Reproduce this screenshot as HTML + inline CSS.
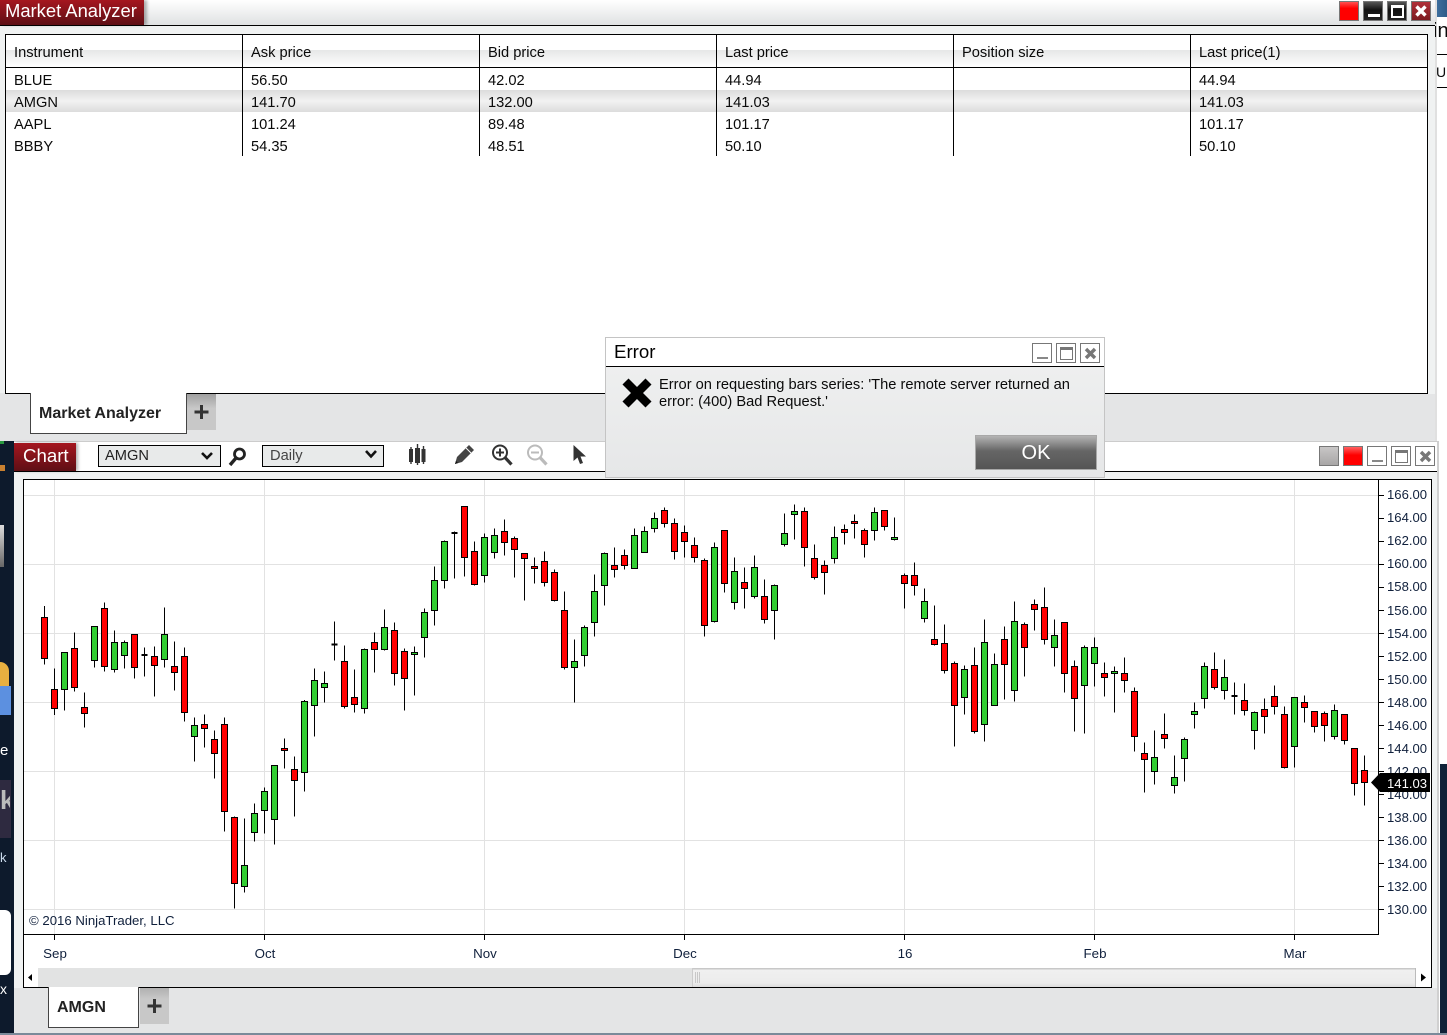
<!DOCTYPE html>
<html><head><meta charset="utf-8"><title>Market Analyzer</title>
<style>
html,body{margin:0;padding:0;width:1447px;height:1035px;overflow:hidden;background:#fff;font-family:"Liberation Sans",sans-serif;color:#000}
div,span,svg{position:absolute;box-sizing:border-box}
.t{font-size:14.67px;line-height:16px;white-space:nowrap;color:#0a0a0a;margin-top:1px}
.v{background:#000;width:1px;top:34px;height:122px}
.p{font-size:13.1px;line-height:16px;left:1387px;white-space:nowrap;color:#10203c}
.d{font-size:13.33px;line-height:16px;top:945px;width:60px;text-align:center;color:#10203c;margin-top:1px}
.wb{width:20px;height:20px;border:1px solid #777}
.dk{background:linear-gradient(#555,#111 45%,#222)}
</style></head><body>

<!-- right window sliver -->
<div style="left:1435px;top:0;width:12px;height:764px;background:#fff"></div>
<div style="left:1437px;top:0;width:10px;height:17px;background:linear-gradient(90deg,#3d6f9e,#2f5c88)"></div>
<div style="left:1435px;top:0;width:2px;height:441px;background:#e0e0e0"></div>
<div class="t" style="left:1433px;top:19px;font-size:20px;line-height:22px">in</div>
<div style="left:1437px;top:54px;width:10px;height:1px;background:#000"></div>
<div class="t" style="left:1436px;top:63px;font-size:14px">Ur</div>
<div style="left:1437px;top:87px;width:10px;height:1px;background:#000"></div>

<!-- Market Analyzer window -->
<div style="left:0;top:0;width:1435px;height:441px;background:#f0f2f2"></div>
<div style="left:0;top:0;width:1435px;height:25px;background:linear-gradient(#fff,#dfe1e2)"></div>
<div style="left:0;top:25px;width:1435px;height:1px;background:#000"></div>
<div style="left:0;top:0;width:144px;height:25px;background:linear-gradient(#a5161f,#5e0f15);box-shadow:3px 0 3px rgba(0,0,0,.3);color:#fff;font-size:18.4px;line-height:22px;padding-left:5px;white-space:nowrap">Market Analyzer</div>
<div class="wb" style="left:1339px;top:1px;background:linear-gradient(#ff5050,#f00 35%)"></div>
<div class="wb dk" style="left:1363px;top:1px"><div style="left:4px;top:12px;width:12px;height:3px;background:#fff"></div></div>
<div class="wb dk" style="left:1387px;top:1px"><div style="left:3px;top:3px;width:13px;height:13px;border:2px solid #fff;border-top-width:3px"></div></div>
<div class="wb" style="left:1411px;top:1px;background:linear-gradient(#b03038,#7c1a20)">
<svg style="left:3px;top:3px" width="12" height="12"><path d="M1.5 1.5L10.5 10.5M10.5 1.5L1.5 10.5" stroke="#fff" stroke-width="3.4"/></svg></div>

<!-- table -->
<div style="left:5px;top:34px;width:1423px;height:360px;background:#fff;border:1px solid #000"></div>
<div style="left:6px;top:50px;width:1421px;height:17px;background:linear-gradient(#e6e7e7,#fff)"></div>
<div style="left:6px;top:67px;width:1421px;height:1px;background:#000"></div>
<div style="left:6px;top:90px;width:1421px;height:22px;background:linear-gradient(#dcdcdc,#f2f2f2 50%,#dcdcdc)"></div>
<div class="v" style="left:242px"></div><div class="v" style="left:479px"></div><div class="v" style="left:716px"></div><div class="v" style="left:953px"></div><div class="v" style="left:1190px"></div>

<div class="t" style="left:14px;top:44px">Instrument</div><div class="t" style="left:251px;top:44px">Ask price</div><div class="t" style="left:488px;top:44px">Bid price</div><div class="t" style="left:725px;top:44px">Last price</div><div class="t" style="left:962px;top:44px">Position size</div><div class="t" style="left:1199px;top:44px">Last price(1)</div>
<div class="t" style="left:14px;top:72px">BLUE</div><div class="t" style="left:251px;top:72px">56.50</div><div class="t" style="left:488px;top:72px">42.02</div><div class="t" style="left:725px;top:72px">44.94</div><div class="t" style="left:1199px;top:72px">44.94</div>
<div class="t" style="left:14px;top:94px">AMGN</div><div class="t" style="left:251px;top:94px">141.70</div><div class="t" style="left:488px;top:94px">132.00</div><div class="t" style="left:725px;top:94px">141.03</div><div class="t" style="left:1199px;top:94px">141.03</div>
<div class="t" style="left:14px;top:116px">AAPL</div><div class="t" style="left:251px;top:116px">101.24</div><div class="t" style="left:488px;top:116px">89.48</div><div class="t" style="left:725px;top:116px">101.17</div><div class="t" style="left:1199px;top:116px">101.17</div>
<div class="t" style="left:14px;top:138px">BBBY</div><div class="t" style="left:251px;top:138px">54.35</div><div class="t" style="left:488px;top:138px">48.51</div><div class="t" style="left:725px;top:138px">50.10</div><div class="t" style="left:1199px;top:138px">50.10</div>

<!-- tab strip top -->
<div style="left:0;top:394px;width:1435px;height:47px;background:#e4e5e6"></div>
<div style="left:0;top:393px;width:5px;height:1px;background:#e4e5e6"></div>
<div style="left:30px;top:393px;width:157px;height:41px;background:#fff;border:1px solid #444;border-top:none;font-weight:bold;font-size:16px;line-height:41px;padding-left:8px;color:#222;white-space:nowrap">Market Analyzer</div>
<div style="left:187px;top:394px;width:29px;height:36px;background:linear-gradient(#a0a0a0,#c8c8c8 40%);"></div>
<svg style="left:187px;top:394px" width="29" height="36"><path d="M14.5 11V25M7.5 18H21.5" stroke="#333" stroke-width="3"/></svg>

<!-- wallpaper left -->
<div style="left:0;top:441px;width:14px;height:594px;background:#0d1a2c"></div>
<div style="left:0;top:441px;width:4px;height:3px;background:#2a9a40"></div>
<div style="left:0;top:465px;width:5px;height:6px;background:#c88030"></div>
<div style="left:0;top:525px;width:4px;height:42px;background:linear-gradient(#ddd,#666)"></div>
<div style="left:0;top:662px;width:9px;height:24px;background:#e8b040;border-top-right-radius:9px"></div>
<div style="left:0;top:686px;width:11px;height:29px;background:#5c90e0"></div>
<div style="left:0;top:742px;color:#fff;font-size:15px;line-height:18px;width:8px;overflow:hidden">e</div>
<div style="left:0;top:780px;width:11px;height:58px;background:#2e2a40"></div>
<div style="left:0;top:786px;width:10px;color:#bbb;font-size:26px;font-weight:bold;line-height:28px;overflow:hidden">k</div>
<div style="left:0;top:850px;color:#cde;font-size:13px;line-height:16px">k</div>
<div style="left:0;top:910px;width:11px;height:65px;background:#fff;border-radius:0 6px 6px 0"></div>
<div style="left:0;top:981px;color:#fff;font-size:14px;line-height:16px">x</div>

<!-- chart window -->
<div style="left:14px;top:441px;width:1425px;height:592px;background:#f0f2f2;border-top:1px solid #ccc;border-right:2px solid #d0d0d0"></div>
<div style="left:1440px;top:764px;width:7px;height:271px;background:#0f2238"></div>
<div style="left:0;top:1033px;width:1447px;height:2px;background:#7a8a9a"></div>
<div style="left:14px;top:442px;width:1423px;height:29px;background:#fff"></div>
<div style="left:14px;top:471px;width:1423px;height:1px;background:#000"></div>
<div style="left:14px;top:443px;width:62px;height:28px;background:linear-gradient(#a5161f,#5e0f15);box-shadow:2px 0 3px rgba(0,0,0,.3);color:#fff;font-size:18.67px;line-height:26px;padding-left:9px">Chart</div>

<div style="left:98px;top:445px;width:123px;height:22px;background:#e8eaea;border:1px solid #000;font-size:14.67px;line-height:20px;padding-left:6px;color:#222">AMGN</div>
<svg style="left:200px;top:451px" width="14" height="10"><path d="M2 2L7 7L12 2" fill="none" stroke="#111" stroke-width="2.6"/></svg>
<svg style="left:226px;top:444px" width="24" height="24"><circle cx="13.5" cy="10" r="5" fill="none" stroke="#222" stroke-width="2.8"/><path d="M10 14L4 21" stroke="#222" stroke-width="3.4"/></svg>
<div style="left:262px;top:445px;width:122px;height:22px;background:#e8eaea;border:1px solid #000;font-size:14.67px;line-height:20px;padding-left:7px;color:#444">Daily</div>
<svg style="left:364px;top:449px" width="14" height="11"><path d="M2 2L7 7.5L12 2" fill="none" stroke="#111" stroke-width="2.6"/></svg>

<svg style="left:405px;top:442px" width="190" height="28">
<path d="M6 5V22M12.5 2V23M18.5 4V22" stroke="#333" stroke-width="1.4"/>
<path d="M4 7H8V20H4ZM10 6H15V21H10ZM16.5 7H20.5V20H16.5Z" fill="#333"/>
<path d="M50 22L52 15L64 3L69 8L57 20Z" fill="#444"/><path d="M61 6L66 11" stroke="#fff" stroke-width="1"/><path d="M50 22L53 21L51 19Z" fill="#111"/>
<circle cx="95" cy="10.5" r="7" fill="#fff" stroke="#333" stroke-width="2"/><path d="M91 10.5H99M95 6.5V14.5" stroke="#333" stroke-width="2"/><path d="M100 15.5L106.5 22.5" stroke="#333" stroke-width="3.2"/>
<circle cx="130" cy="10.5" r="7" fill="#fff" stroke="#bbb" stroke-width="2"/><path d="M126 10.5H134" stroke="#bbb" stroke-width="2"/><path d="M135 15.5L141.5 22.5" stroke="#bbb" stroke-width="3.2"/>
<path d="M168.5 3V19L172.5 15.5L175 22L178 21L175.5 14.500H181Z" fill="#333"/>
</svg>

<div class="wb" style="left:1319px;top:446px;background:linear-gradient(#c8c6c6,#a8a6a6)"></div>
<div class="wb" style="left:1343px;top:446px;background:linear-gradient(#ff6060,#f00 45%)"></div>
<div class="wb" style="left:1367px;top:446px;background:#fff"><div style="left:4px;top:13px;width:11px;height:2px;background:#888"></div></div>
<div class="wb" style="left:1391px;top:446px;background:#fff"><div style="left:3px;top:3px;width:13px;height:13px;border:1px solid #777;border-top-width:3px"></div></div>
<div class="wb" style="left:1415px;top:446px;background:#fff"><svg style="left:3px;top:3px" width="13" height="13"><path d="M2 2L11 11M11 2L2 11" stroke="#777" stroke-width="3.4"/></svg></div>

<!-- chart frame -->
<div style="left:23px;top:479px;width:1409px;height:509px;background:#fff;border:1px solid #000"></div>
<div style="left:24px;top:968px;width:668px;height:19px;background:#e2e3e3"></div>
<div style="left:692px;top:968px;width:724px;height:19px;background:linear-gradient(#c8c8c8 0,#c8c8c8 1px,#f0f0f0 2px,#ececec 15px,#dcdcdc);border-left:1px solid #ccc;border-right:1px solid #bbb"></div>
<svg style="left:695px;top:972px" width="6" height="11"><path d="M0.500 0V11M2.500 0V11M4.500 0V11" stroke="#c8c8c8"/></svg>
<div style="left:24px;top:968px;width:14px;height:19px;background:#fff"></div>
<svg style="left:24px;top:968px" width="14" height="19"><path d="M4 9.500L8 6V13Z" fill="#000"/></svg>
<svg style="left:1417px;top:968px" width="14" height="19"><path d="M9 9.500L4 5.500V13.500Z" fill="#000"/></svg>

<svg style="left:0;top:0" width="1447" height="1035" shape-rendering="crispEdges">
<g stroke="#e2e2e2" stroke-width="1" fill="none">
<path d="M24 495.5H1378M24 564.5H1378M24 633.5H1378M24 702.5H1378M24 771.5H1378M24 840.5H1378M24 909.5H1378"/>
<path d="M54.5 480V934M264.5 480V934M484.5 480V934M684.5 480V934M904.5 480V934M1094.5 480V934M1294.5 480V934"/>
</g>
<path d="M24 934.5H1378M1378.5 480V935" stroke="#000" fill="none"/>
<path d="M54.5 934V940M264.5 934V940M484.5 934V940M684.5 934V940M904.5 934V940M1094.5 934V940M1294.5 934V940" stroke="#000"/>
<path d="M1378 495.5H1384M1378 518.5H1384M1378 541.5H1384M1378 564.5H1384M1378 587.5H1384M1378 610.5H1384M1378 633.5H1384M1378 656.5H1384M1378 679.5H1384M1378 702.5H1384M1378 725.5H1384M1378 748.5H1384M1378 771.5H1384M1378 794.5H1384M1378 817.5H1384M1378 840.5H1384M1378 863.5H1384M1378 886.5H1384M1378 909.5H1384" stroke="#000"/>

<g transform="translate(20,590) scale(.33333)" stroke="#000" stroke-width="3">
<path fill="none" d="M73.5 48V224M103.5 235V375M133.5 187V362M163.5 127V305M193.5 307V413M223.5 109V233M253.5 37V245M283.5 121V248M313.5 151V236M343.5 133V266M373.5 172V260M403.5 169V320M433.5 52V233M463.5 154V302M493.5 172V395M523.5 382V515M553.5 373V473M583.5 421V566M613.5 382V725M643.5 679V956M673.5 685V908M703.5 640V755M733.5 592V731M763.5 526V764M793.5 445V536M823.5 499V680M853.5 330V605M883.5 235V440M913.5 244V338M943.5 94V212M973.5 166V356M1003.5 238V368"/>
<path fill="#ff0000" d="M64.5 82H82.5V205H64.5ZM94.5 298H112.5V355H94.5ZM154.5 175H172.5V292H154.5ZM184.5 352H202.5V370H184.5ZM244.5 55H262.5V229H244.5ZM334.5 133H352.5V232H334.5ZM394.5 199H412.5V226H394.5ZM454.5 229H472.5V247H454.5ZM484.5 199H502.5V367H484.5ZM544.5 403H562.5V415H544.5ZM574.5 448H592.5V490H574.5ZM604.5 403H622.5V664H604.5ZM634.5 682H652.5V880H634.5ZM784.5 475H802.5V481H784.5ZM814.5 538H832.5V571H814.5ZM964.5 214H982.5V349H964.5ZM994.5 322H1012.5V343H994.5Z"/>
<path fill="#32cd32" d="M124.5 187H142.5V298H124.5ZM214.5 109H232.5V211H214.5ZM274.5 157H292.5V238H274.5ZM304.5 157H322.5V196H304.5ZM424.5 133H442.5V208H424.5ZM514.5 406H532.5V439H514.5ZM664.5 826H682.5V889H664.5ZM694.5 670H712.5V727H694.5ZM724.5 604H742.5V661H724.5ZM754.5 526H772.5V688H754.5ZM844.5 334H862.5V547H844.5ZM874.5 271H892.5V346H874.5ZM904.5 280H922.5V292H904.5Z"/>
<path fill="none" stroke-width="6" d="M364.5 194.5H382.5M934.5 164H952.5"/>
</g>

<g transform="translate(340,495) scale(.33333)" stroke="#000" stroke-width="3">
<path fill="none" d="M43.5 523V653M73.5 460V656M103.5 412V533M133.5 343V467M163.5 382V572M193.5 460V647M223.5 454V602M253.5 340V488M283.5 214V392M313.5 136V281M343.5 109V251M373.5 34V245M403.5 139V272M433.5 115V263M463.5 100V191M493.5 73V182M523.5 124V248M553.5 175V317M583.5 187V266M613.5 169V275M643.5 223V320M673.5 289V524M703.5 433V623M733.5 391V515M763.5 238V425M793.5 172V332M823.5 157V248M853.5 163V224M883.5 100V220M913.5 94V172M943.5 52V113M973.5 37V98M1003.5 70V194"/>
<path fill="#ff0000" d="M34.5 607H52.5V628H34.5ZM94.5 442H112.5V463H94.5ZM154.5 406H172.5V535H154.5ZM184.5 469H202.5V550H184.5ZM364.5 34H382.5V187H364.5ZM394.5 169H412.5V268H394.5ZM484.5 109H502.5V142H484.5ZM514.5 130H532.5V163H514.5ZM544.5 175H562.5V190H544.5ZM574.5 214H592.5V220H574.5ZM604.5 199H622.5V262H604.5ZM634.5 232H652.5V316H634.5ZM664.5 346H682.5V517H664.5ZM814.5 211H832.5V223H814.5ZM844.5 181H862.5V211H844.5ZM964.5 46H982.5V85H964.5ZM994.5 85H1012.5V169H994.5Z"/>
<path fill="#32cd32" d="M64.5 463H82.5V640H64.5ZM124.5 397H142.5V463H124.5ZM214.5 472H232.5V478H214.5ZM244.5 352H262.5V427H244.5ZM274.5 256H292.5V346H274.5ZM304.5 139H322.5V256H304.5ZM424.5 127H442.5V241H424.5ZM454.5 121H472.5V172H454.5ZM694.5 499H712.5V517H694.5ZM724.5 397H742.5V481H724.5ZM754.5 289H772.5V382H754.5ZM784.5 175H802.5V271H784.5ZM874.5 121H892.5V220H874.5ZM904.5 109H922.5V172H904.5ZM934.5 70H952.5V100H934.5Z"/>
<path fill="none" stroke-width="6" d="M334.5 114H352.5"/>
</g>

<g transform="translate(670,495) scale(.33333)" stroke="#000" stroke-width="3">
<path fill="none" d="M43.5 91V188M73.5 127V203M103.5 190V425M133.5 142V383M163.5 106V293M193.5 187V344M223.5 217V341M253.5 181V311M283.5 253V386M313.5 268V434M343.5 55V155M373.5 28V134M403.5 37V215M433.5 148V254M463.5 196V299M493.5 94V206M523.5 88V149M553.5 58V131M583.5 100V188M613.5 37V137M643.5 46V107M673.5 67V137M703.5 235V341M733.5 202V302M763.5 280V383M793.5 331V452M823.5 388V536M853.5 499V755M883.5 511V659M913.5 457V716M943.5 373V740M973.5 475V631M1003.5 394V614"/>
<path fill="#ff0000" d="M34.5 112H52.5V139H34.5ZM64.5 151H82.5V187H64.5ZM94.5 196H112.5V391H94.5ZM154.5 106H172.5V265H154.5ZM214.5 262H232.5V280H214.5ZM274.5 304H292.5V373H274.5ZM394.5 49H412.5V157H394.5ZM424.5 190H442.5V247H424.5ZM454.5 211H472.5V232H454.5ZM514.5 103H532.5V112H514.5ZM544.5 79H562.5V85H544.5ZM574.5 106H592.5V148H574.5ZM634.5 46H652.5V94H634.5ZM694.5 241H712.5V265H694.5ZM724.5 241H742.5V271H724.5ZM784.5 433H802.5V448H784.5ZM814.5 445H832.5V526H814.5ZM844.5 505H862.5V631H844.5ZM904.5 511H922.5V709H904.5ZM994.5 433H1012.5V508H994.5Z"/>
<path fill="#32cd32" d="M124.5 157H142.5V379H124.5ZM184.5 229H202.5V322H184.5ZM244.5 217H262.5V304H244.5ZM304.5 271H322.5V346H304.5ZM334.5 115H352.5V148H334.5ZM364.5 49H382.5V58H364.5ZM484.5 127H502.5V190H484.5ZM604.5 52H622.5V106H604.5ZM664.5 127H682.5V133H664.5ZM754.5 319H772.5V370H754.5ZM874.5 523H892.5V607H874.5ZM934.5 442H952.5V688H934.5ZM964.5 508H982.5V631H964.5Z"/>
</g>

<g transform="translate(1000,580) scale(.33333)" stroke="#000" stroke-width="3">
<path fill="none" d="M43.5 64V365M73.5 127V290M103.5 58V152M133.5 22V194M163.5 118V260M193.5 127V338M223.5 241V455M253.5 196V461M283.5 172V320M313.5 247V350M343.5 259V398M373.5 232V338M403.5 322V515M433.5 487V638M463.5 451V614M493.5 400V506M523.5 526V641M553.5 472V605M583.5 367V446M613.5 247V386M643.5 217V328M673.5 238V359M703.5 307V404M733.5 310V407M763.5 394V509M793.5 355V461M823.5 316V404M853.5 379V566M883.5 352V563M913.5 346V428M943.5 394V458M973.5 394V485M1003.5 373V479M1033.5 403V494M1063.5 505V647M1093.5 526V677"/>
<path fill="#ff0000" d="M64.5 133H82.5V202H64.5ZM94.5 73H112.5V88H94.5ZM124.5 82H142.5V178H124.5ZM184.5 127H202.5V280H184.5ZM214.5 259H232.5V355H214.5ZM304.5 280H322.5V292H304.5ZM364.5 280H382.5V301H364.5ZM394.5 334H412.5V469H394.5ZM424.5 520H442.5V538H424.5ZM484.5 463H502.5V475H484.5ZM634.5 268H652.5V322H634.5ZM724.5 361H742.5V391H724.5ZM784.5 388H802.5V409H784.5ZM814.5 349H832.5V379H814.5ZM844.5 403H862.5V562H844.5ZM904.5 367H922.5V382H904.5ZM934.5 394H952.5V439H934.5ZM964.5 400H982.5V436H964.5ZM1024.5 403H1042.5V481H1024.5ZM1054.5 505H1072.5V610H1054.5ZM1084.5 571H1102.5V607H1084.5Z"/>
<path fill="#32cd32" d="M34.5 124H52.5V331H34.5ZM154.5 166H172.5V202H154.5ZM244.5 202H262.5V316H244.5ZM274.5 202H292.5V250H274.5ZM334.5 274H352.5V280H334.5ZM454.5 532H472.5V574H454.5ZM514.5 592H532.5V616H514.5ZM544.5 478H562.5V535H544.5ZM574.5 394H592.5V403H574.5ZM604.5 259H622.5V355H604.5ZM664.5 292H682.5V331H664.5ZM754.5 397H772.5V451H754.5ZM874.5 352H892.5V499H874.5ZM994.5 391H1012.5V469H994.5Z"/>
<path fill="none" stroke-width="6" d="M694.5 347.5H712.5"/>
</g>
</svg>

<!-- price axis -->
<div class="p" style="top:487px">166.00</div><div class="p" style="top:510px">164.00</div><div class="p" style="top:533px">162.00</div><div class="p" style="top:556px">160.00</div><div class="p" style="top:579px">158.00</div><div class="p" style="top:603px">156.00</div><div class="p" style="top:626px">154.00</div><div class="p" style="top:649px">152.00</div><div class="p" style="top:672px">150.00</div><div class="p" style="top:695px">148.00</div><div class="p" style="top:718px">146.00</div><div class="p" style="top:741px">144.00</div><div class="p" style="top:764px">142.00</div><div class="p" style="top:787px">140.00</div><div class="p" style="top:810px">138.00</div><div class="p" style="top:833px">136.00</div><div class="p" style="top:856px">134.00</div><div class="p" style="top:879px">132.00</div><div class="p" style="top:902px">130.00</div>
<svg style="left:1371px;top:773px" width="60" height="19"><path d="M0 9.500L9 0H59V19H9Z" fill="#000"/></svg>
<div class="p" style="top:776px;color:#fff">141.03</div>

<div class="t" style="left:29px;top:912px;font-size:13.2px;color:#10203c">© 2016 NinjaTrader, LLC</div>
<div class="d" style="left:25px">Sep</div><div class="d" style="left:235px">Oct</div><div class="d" style="left:455px">Nov</div><div class="d" style="left:655px">Dec</div><div class="d" style="left:875px">16</div><div class="d" style="left:1065px">Feb</div><div class="d" style="left:1265px">Mar</div>

<!-- bottom tab -->
<div style="left:14px;top:988px;width:1423px;height:45px;background:#e4e5e6"></div>
<div style="left:48px;top:987px;width:91px;height:41px;background:#fff;border:1px solid #444;border-top:none;font-weight:bold;font-size:16px;line-height:41px;padding-left:8px;color:#222">AMGN</div>
<div style="left:140px;top:988px;width:29px;height:36px;background:linear-gradient(#b0b0b0,#c8c8c8 30%)"></div>
<svg style="left:140px;top:988px" width="29" height="36"><path d="M14.5 11V25M7.5 18H21.5" stroke="#333" stroke-width="3"/></svg>

<!-- error dialog -->
<div style="left:605px;top:337px;width:500px;height:141px;background:linear-gradient(#f0f1f1,#e6e7e8);border:1px solid #c4c4c4"></div>
<div style="left:606px;top:338px;width:498px;height:29px;background:#fff;border-bottom:1px solid #000;font-size:18.67px;line-height:27px;padding-left:8px">Error</div>
<div class="wb" style="left:1032px;top:343px;background:#fff"><div style="left:4px;top:13px;width:11px;height:2px;background:#888"></div></div>
<div class="wb" style="left:1056px;top:343px;background:#fff"><div style="left:3px;top:3px;width:13px;height:13px;border:1px solid #777;border-top-width:3px"></div></div>
<div class="wb" style="left:1080px;top:343px;background:#fff"><svg style="left:3px;top:3px" width="13" height="13"><path d="M2 2L11 11M11 2L2 11" stroke="#777" stroke-width="3.4"/></svg></div>
<svg style="left:621px;top:377px" width="32" height="32"><path d="M4.500 4.500L27.500 27.500M27.500 4.500L4.500 27.500" stroke="#000" stroke-width="8.500"/></svg>
<div class="t" style="left:659px;top:376px">Error on requesting bars series: 'The remote server returned an</div>
<div class="t" style="left:659px;top:393px">error: (400) Bad Request.'</div>
<div style="left:975px;top:435px;width:122px;height:35px;background:linear-gradient(#b4b4b4,#666 45%,#555);border:1px solid #a8a8a8;color:#fff;font-size:20px;line-height:35px;text-align:center">OK</div>
</body></html>
